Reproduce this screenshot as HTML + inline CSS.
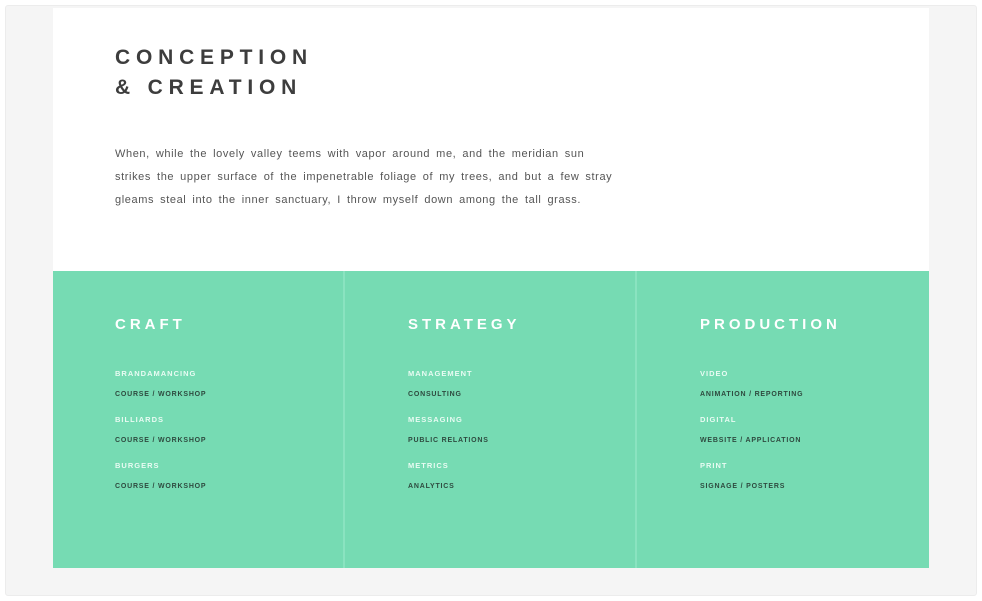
<!DOCTYPE html>
<html><head><meta charset="utf-8">
<style>
*{margin:0;padding:0;box-sizing:border-box}
body{width:982px;height:601px;background:#fff;position:relative;overflow:hidden;font-family:"Liberation Sans",sans-serif}
.outer{position:absolute;left:5px;top:5px;width:972px;height:591px;background:#f5f5f5;border:1px solid #ececec;border-radius:3px}
.white{position:absolute;left:53px;top:8px;width:876px;height:263px;background:#fff}
h1{position:absolute;left:115px;top:43px;font-size:21px;font-weight:bold;letter-spacing:5.8px;color:#3d3d3d;line-height:30px}
p{position:absolute;left:115px;top:143px;width:560px;font-size:11px;line-height:23px;color:#555;white-space:nowrap;letter-spacing:0.6px;word-spacing:2.4px}
.green{position:absolute;left:53px;top:271px;width:876px;height:297px;background:#76dbb3}
.div{position:absolute;top:0;width:2px;height:297px;background:#8ae3c0}
.col{position:absolute;top:45px}
.col h2{font-size:15px;font-weight:bold;letter-spacing:4px;color:#fff;margin-bottom:35px;line-height:18px}
.lab{font-size:7.5px;font-weight:bold;letter-spacing:1px;color:#e9fbf3;line-height:10px}
.sub{font-size:7px;font-weight:bold;letter-spacing:.8px;color:#2e4a3f;line-height:10px;margin-top:11px;margin-bottom:15px}
</style></head><body>
<div class="outer"></div>
<div class="white"></div>
<h1>CONCEPTION<br>&amp; CREATION</h1>
<p>When, while the lovely valley teems with vapor around me, and the meridian sun<br>strikes the upper surface of the impenetrable foliage of my trees, and but a few stray<br>gleams steal into the inner sanctuary, I throw myself down among the tall grass.</p>
<div class="green">
<div class="div" style="left:290px"></div>
<div class="div" style="left:582px"></div>
<div class="col" style="left:62px"><h2>CRAFT</h2>
<div class="lab">BRANDAMANCING</div><div class="sub">COURSE / WORKSHOP</div>
<div class="lab">BILLIARDS</div><div class="sub">COURSE / WORKSHOP</div>
<div class="lab">BURGERS</div><div class="sub">COURSE / WORKSHOP</div></div>
<div class="col" style="left:355px"><h2>STRATEGY</h2>
<div class="lab">MANAGEMENT</div><div class="sub">CONSULTING</div>
<div class="lab">MESSAGING</div><div class="sub">PUBLIC RELATIONS</div>
<div class="lab">METRICS</div><div class="sub">ANALYTICS</div></div>
<div class="col" style="left:647px"><h2>PRODUCTION</h2>
<div class="lab">VIDEO</div><div class="sub">ANIMATION / REPORTING</div>
<div class="lab">DIGITAL</div><div class="sub">WEBSITE / APPLICATION</div>
<div class="lab">PRINT</div><div class="sub">SIGNAGE / POSTERS</div></div>
</div>
</body></html>
